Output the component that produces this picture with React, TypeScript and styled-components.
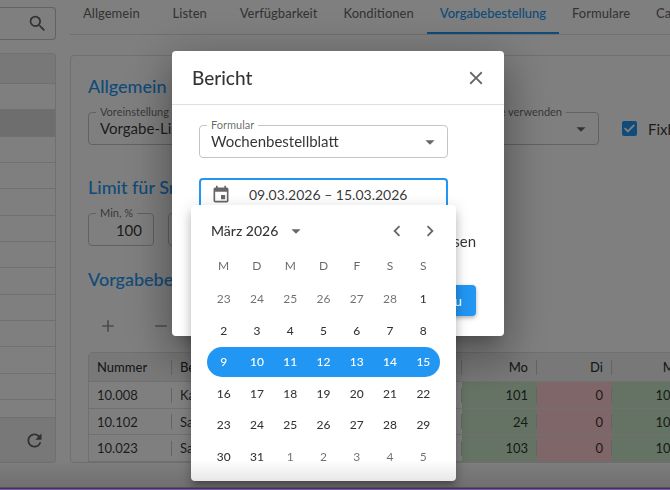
import React from "react";
import styled, { createGlobalStyle } from "styled-components";
import {
  MdAdd,
  MdArrowDropDown,
  MdChevronLeft,
  MdChevronRight,
  MdClose,
  MdEvent,
  MdRefresh,
  MdRemove,
  MdSearch,
} from "react-icons/md";

const blue = "#2196f3";
const ink = "rgba(0, 0, 0, 0.8)";
const muted = "rgba(0, 0, 0, 0.6)";
const line = "#e0e0e0";

const GlobalStyle = createGlobalStyle`
  *, *::before, *::after { box-sizing: border-box; }
  html, body, #root { height: 100%; }
  body {
    margin: 0;
    overflow: hidden;
    background: #fff;
    color: ${ink};
    font-family: Lato, "Liberation Sans", sans-serif;
    font-size: 15px;
  }
  button, input, select { font: inherit; color: inherit; }
`;

const Page = styled.div`
  display: flex;
  gap: 14px;
  height: 100vh;
  padding-bottom: 27px;
  overflow: hidden;
`;

const Sidebar = styled.aside`
  flex: 0 0 56px;
  display: flex;
  flex-direction: column;
  gap: 13px;
  padding-top: 7px;
`;

const SearchBox = styled.div`
  flex: none;
  display: flex;
  align-items: center;
  justify-content: flex-end;
  height: 33px;
  padding-right: 7px;
  border: 1px solid #c4c4c4;
  border-left: 0;
  border-radius: 0 4px 4px 0;
`;

const IconButton = styled.button<{ $size?: number; $tone?: string }>`
  flex: none;
  display: grid;
  place-items: center;
  width: ${(p) => p.$size ?? 22}px;
  height: ${(p) => p.$size ?? 22}px;
  padding: 0;
  border: 0;
  background: none;
  color: ${(p) => p.$tone ?? muted};
  cursor: pointer;
`;

const List = styled.div`
  flex: 1;
  min-height: 0;
  display: flex;
  flex-direction: column;
  border: 1px solid ${line};
  border-left: 0;
  border-radius: 0 4px 4px 0;
  overflow: hidden;
`;

const ListHead = styled.div`
  flex: 0 0 30px;
  background: #f0f0f0;
  border-bottom: 1px solid ${line};
`;

const ListRows = styled.div`
  flex: 1;
  min-height: 0;
  display: grid;
  grid-template-rows: repeat(12, 1fr);
  padding-bottom: 17px;
`;

const ListRow = styled.div<{ $selected?: boolean }>`
  border-bottom: 1px solid ${line};
  background: ${(p) => (p.$selected ? "#dcdcdc" : "none")};
`;

const ListFoot = styled.div`
  flex: 0 0 45px;
  display: flex;
  align-items: center;
  justify-content: flex-end;
  padding-right: 10px;
  background: #f0f0f0;
  border-top: 1px solid ${line};
`;

const Main = styled.main`
  flex: 1 0 640px;
  display: flex;
  flex-direction: column;
  gap: 20px;
`;

const Tabs = styled.div`
  flex: 0 0 34px;
  display: flex;
  border-bottom: 1px solid ${line};
`;

const Tab = styled.button<{ $active?: boolean }>`
  flex: none;
  min-width: 74px;
  height: 34px;
  padding: 0 13px 6px;
  border: 0;
  border-bottom: 2px solid ${(p) => (p.$active ? blue : "transparent")};
  background: none;
  color: ${(p) => (p.$active ? blue : muted)};
  font-size: 13px;
  font-weight: 500;
  white-space: nowrap;
  cursor: pointer;
`;

const Card = styled.section`
  flex: 1;
  min-height: 0;
  padding: 16px 18px 0 17px;
  border: 1px solid ${line};
  border-radius: 4px;
  overflow: hidden;
`;

const Heading = styled.h2`
  margin: 0;
  color: ${blue};
  font-size: 18px;
  line-height: 28px;
  font-weight: 500;
  white-space: nowrap;
`;

const FieldRow = styled.div<{ $bottom: number }>`
  display: flex;
  align-items: center;
  gap: 14px;
  padding: 12px 0 ${(p) => p.$bottom}px;
`;

const FieldBox = styled.div<{ $width?: number; $focus?: boolean }>`
  position: relative;
  flex: none;
  display: flex;
  align-items: center;
  width: ${(p) => (p.$width ? `${p.$width}px` : "100%")};
  height: 33px;
  border: ${(p) => (p.$focus ? `2px solid ${blue}` : "1px solid #c4c4c4")};
  border-radius: 4px;
  background: #fff;

  > label {
    position: absolute;
    top: -8px;
    left: 7px;
    padding: 0 4px;
    background: #fff;
    color: ${muted};
    font-size: 11px;
    line-height: 14px;
    white-space: nowrap;
  }

  > label.end {
    left: auto;
    right: 32px;
  }

  > svg {
    position: absolute;
    right: 6px;
    color: ${muted};
    pointer-events: none;
  }
`;

const Select = styled.select`
  appearance: none;
  width: 100%;
  height: 100%;
  padding: 0 30px 2px 11px;
  border: 0;
  outline: 0;
  background: none;
`;

const Input = styled.input<{ $align?: string }>`
  flex: 1;
  width: 100%;
  min-width: 0;
  height: 100%;
  padding: 0 11px;
  border: 0;
  outline: 0;
  background: none;
  text-align: ${(p) => p.$align ?? "left"};
`;

const DateInput = styled(Input)`
  padding: 0 9px;
  font-size: 14px;
`;

const CheckLabel = styled.label`
  display: flex;
  align-items: center;
  gap: 11px;
  white-space: nowrap;

  ${FieldBox} + & {
    margin-left: 9px;
  }

  input {
    appearance: none;
    display: grid;
    place-items: center;
    width: 15px;
    height: 15px;
    margin: 0;
    border: 2px solid ${muted};
    border-radius: 2px;
  }

  input:checked {
    border-color: ${blue};
    background: ${blue};
  }

  input:checked::after {
    content: "";
    width: 11px;
    height: 9px;
    background: #fff;
    clip-path: polygon(0 52%, 12% 38%, 35% 68%, 88% 2%, 100% 16%, 35% 98%);
  }
`;

const Toolbar = styled.div`
  display: flex;
  gap: 31px;
  padding: 22px 0 15px 9px;
`;

const Table = styled.table`
  table-layout: fixed;
  width: 674px;
  border-collapse: separate;
  border-spacing: 0;
  border: 1px solid ${line};
  border-radius: 4px 4px 0 0;
  font-size: 13px;

  th {
    height: 29px;
    background: #f0f0f0;
    font-weight: 500;
  }

  td {
    height: 27px;
  }

  tr:nth-child(even) td {
    height: 26px;
  }

  th,
  td {
    padding: 0 9px 0 8px;
    border-bottom: 1px solid ${line};
    background-image: linear-gradient(#c8c8c8, #c8c8c8);
    background-size: 1px 15px;
    background-repeat: no-repeat;
    background-position: right center;
    text-align: right;
  }

  th:nth-child(-n + 2),
  td:nth-child(-n + 2) {
    text-align: left;
  }
`;

const DayCell = styled.td<{ $open: boolean }>`
  background-color: ${(p) => (p.$open ? "#c8e6c9" : "#ffcdd2")};
`;

const Backdrop = styled.div`
  position: fixed;
  inset: 0;
  display: flex;
  align-items: flex-start;
  justify-content: center;
  padding: 51px 16px 16px 22px;
  background: rgba(0, 0, 0, 0.5);
`;

const Dialog = styled.div`
  flex: 0 1 332px;
  min-width: 0;
  border-radius: 4px;
  background: #fff;
  box-shadow: 0 11px 15px -7px rgba(0, 0, 0, 0.2),
    0 24px 38px 3px rgba(0, 0, 0, 0.14), 0 9px 46px 8px rgba(0, 0, 0, 0.22);
`;

const DialogHead = styled.header`
  display: flex;
  align-items: center;
  justify-content: space-between;
  height: 54px;
  padding: 0 17px 0 20px;
  border-bottom: 1px solid ${line};
`;

const Title = styled.h1`
  margin: 0;
  font-size: 19px;
  font-weight: 500;
`;

const DialogBody = styled.div`
  display: flex;
  flex-direction: column;
  gap: 21px;
  padding: 20px 28px 20px 27px;
`;

const Fields = styled.div`
  display: flex;
  flex-direction: column;
  gap: 20px;
  padding-right: 28px;
`;

const DateField = styled.div`
  position: relative;
`;

const DialogEnd = styled.div`
  display: flex;
  justify-content: flex-end;
`;

const PrimaryButton = styled.button`
  height: 31px;
  margin-top: 14px;
  padding: 0 14px;
  border: 0;
  border-radius: 4px;
  background: ${blue};
  color: #fff;
  font-size: 14px;
  font-weight: 500;
  box-shadow: 0 2px 4px rgba(0, 0, 0, 0.3);
`;

const Picker = styled.div`
  position: absolute;
  top: 27px;
  left: -8px;
  width: 265px;
  padding: 8px 16px 9px;
  border-radius: 4px;
  background: #fff;
  box-shadow: 0 5px 5px -3px rgba(0, 0, 0, 0.2),
    0 8px 10px 1px rgba(0, 0, 0, 0.14), 0 3px 14px 2px rgba(0, 0, 0, 0.12);
`;

const PickerHead = styled.div`
  display: flex;
  align-items: center;
  height: 35px;
  margin-right: -6px;
  padding-left: 4px;
`;

const MonthButton = styled.button`
  display: flex;
  align-items: center;
  gap: 7px;
  margin-right: auto;
  padding: 0;
  border: 0;
  background: none;
  font-size: 14px;
  font-weight: 500;

  svg {
    color: ${muted};
  }
`;

const Week = styled.div<{ $selected?: boolean; $head?: boolean }>`
  display: grid;
  grid-template-columns: repeat(7, 1fr);
  place-items: center;
  height: ${(p) => (p.$head ? 35 : 30)}px;
  border-radius: 15px;
  background: ${(p) => (p.$selected ? blue : "none")};
  color: ${(p) => (p.$selected ? "#fff" : p.$head ? muted : ink)};
  font-size: 12px;
`;

const Weeks = styled.div`
  display: grid;
  grid-template-rows: repeat(6, 1fr);
  align-items: center;
  height: 189px;
`;

const Day = styled.button<{ $outside?: boolean }>`
  width: 100%;
  height: 100%;
  padding: 0;
  border: 0;
  background: none;
  font-weight: ${(p) => (p.$outside ? 400 : 500)};
  opacity: ${(p) => (p.$outside ? 0.7 : 1)};
  cursor: pointer;
`;

const ScreenEdge = styled.div`
  position: fixed;
  inset: auto 0 0;
  height: 30px;
  border-bottom: 1px solid #8055bd;
  background: linear-gradient(transparent, rgba(0, 0, 0, 0.12) 27px, #40334d 28px);
  pointer-events: none;
`;

const tabs = [
  "Allgemein",
  "Listen",
  "Verfügbarkeit",
  "Konditionen",
  "Vorgabebestellung",
  "Formulare",
  "Cashback",
];

const rows = [
  ["10.008", "Kaiser", "101", "0", "101"],
  ["10.102", "Salz", "24", "0", "100"],
  ["10.023", "Sand", "103", "0", "103"],
];

const weeks = [
  [23, 24, 25, 26, 27, 28, 1],
  [2, 3, 4, 5, 6, 7, 8],
  [9, 10, 11, 12, 13, 14, 15],
  [16, 17, 18, 19, 20, 21, 22],
  [23, 24, 25, 26, 27, 28, 29],
  [30, 31, 1, 2, 3, 4, 5],
];

const isOutside = (week: number, day: number) =>
  (week === 0 && day > 7) || (week === 5 && day < 7);

export default function App() {
  return (
    <>
      <GlobalStyle />
      <Page>
        <Sidebar>
          <SearchBox>
            <IconButton aria-label="Suchen">
              <MdSearch size={21} />
            </IconButton>
          </SearchBox>
          <List>
            <ListHead />
            <ListRows>
              {Array.from({ length: 12 }, (_, i) => (
                <ListRow key={i} $selected={i === 1} />
              ))}
            </ListRows>
            <ListFoot>
              <IconButton aria-label="Aktualisieren">
                <MdRefresh size={21} />
              </IconButton>
            </ListFoot>
          </List>
        </Sidebar>
        <Main>
          <Tabs role="tablist">
            {tabs.map((t) => (
              <Tab
                key={t}
                role="tab"
                aria-selected={t === "Vorgabebestellung"}
                $active={t === "Vorgabebestellung"}
              >
                {t}
              </Tab>
            ))}
          </Tabs>
          <Card>
            <Heading>Allgemein</Heading>
            <FieldRow $bottom={28}>
              <FieldBox $width={235}>
                <label htmlFor="preset">Voreinstellung</label>
                <Select id="preset">
                  <option>Vorgabe-Liste</option>
                </Select>
                <MdArrowDropDown size={22} />
              </FieldBox>
              <FieldBox $width={262}>
                <label htmlFor="template" className="end">
                  Vorlage verwenden
                </label>
                <Select id="template">
                  <option></option>
                </Select>
                <MdArrowDropDown size={22} />
              </FieldBox>
              <CheckLabel>
                <input type="checkbox" defaultChecked />
                Fixbestellung
              </CheckLabel>
            </FieldRow>
            <Heading>Limit für Smartorder</Heading>
            <FieldRow $bottom={19}>
              <FieldBox $width={66}>
                <label htmlFor="min">Min, %</label>
                <Input id="min" defaultValue="100" $align="right" />
              </FieldBox>
              <FieldBox $width={66}>
                <label htmlFor="max">Max, %</label>
                <Input id="max" defaultValue="100" $align="right" />
              </FieldBox>
            </FieldRow>
            <Heading>Vorgabebestellung</Heading>
            <Toolbar>
              <IconButton aria-label="Hinzufügen" $tone="rgba(0,0,0,.4)">
                <MdAdd size={20} />
              </IconButton>
              <IconButton aria-label="Entfernen" $tone="rgba(0,0,0,.4)">
                <MdRemove size={20} />
              </IconButton>
            </Toolbar>
            <Table>
              <colgroup>
                <col width="83" />
                <col width="290" />
                <col width="75" />
                <col width="75" />
                <col width="75" />
              </colgroup>
              <thead>
                <tr>
                  <th>Nummer</th>
                  <th>Bezeichnung</th>
                  <th>Mo</th>
                  <th>Di</th>
                  <th>Mi</th>
                  <th>Do</th>
                </tr>
              </thead>
              <tbody>
                {rows.map(([id, name, ...days]) => (
                  <tr key={id}>
                    <td>{id}</td>
                    <td>{name}</td>
                    {days.map((d, i) => (
                      <DayCell key={i} $open={i !== 1}>
                        {d}
                      </DayCell>
                    ))}
                    <DayCell $open>0</DayCell>
                  </tr>
                ))}
              </tbody>
            </Table>
          </Card>
        </Main>
      </Page>
      <Backdrop>
        <Dialog role="dialog" aria-modal="true" aria-labelledby="title">
          <DialogHead>
            <Title id="title">Bericht</Title>
            <IconButton aria-label="Schließen">
              <MdClose size={22} />
            </IconButton>
          </DialogHead>
          <DialogBody>
            <Fields>
              <FieldBox>
                <label htmlFor="form">Formular</label>
                <Select id="form">
                  <option>Wochenbestellblatt</option>
                </Select>
                <MdArrowDropDown size={22} />
              </FieldBox>
              <DateField>
                <FieldBox $focus>
                  <IconButton aria-label="Kalender öffnen" $size={39}>
                    <MdEvent size={20} />
                  </IconButton>
                  <DateInput
                    aria-label="Zeitraum"
                    defaultValue="09.03.2026 – 15.03.2026"
                  />
                </FieldBox>
                <Picker>
                  <PickerHead>
                    <MonthButton>
                      März 2026
                      <MdArrowDropDown size={22} />
                    </MonthButton>
                    <IconButton aria-label="Vorheriger Monat" $size={33}>
                      <MdChevronLeft size={22} />
                    </IconButton>
                    <IconButton aria-label="Nächster Monat" $size={33}>
                      <MdChevronRight size={22} />
                    </IconButton>
                  </PickerHead>
                  <Week $head>
                    {["M", "D", "M", "D", "F", "S", "S"].map((d, i) => (
                      <span key={i}>{d}</span>
                    ))}
                  </Week>
                  <Weeks>
                    {weeks.map((week, w) => (
                      <Week key={w} $selected={w === 2}>
                        {week.map((day) => (
                          <Day key={day} $outside={isOutside(w, day)}>
                            {day}
                          </Day>
                        ))}
                      </Week>
                    ))}
                  </Weeks>
                </Picker>
              </DateField>
            </Fields>
            <DialogEnd>
              <CheckLabel>
                <input type="checkbox" />
                Leere Artikel auslassen
              </CheckLabel>
            </DialogEnd>
            <DialogEnd>
              <PrimaryButton>Vorschau</PrimaryButton>
            </DialogEnd>
          </DialogBody>
        </Dialog>
      </Backdrop>
      <ScreenEdge />
    </>
  );
}
